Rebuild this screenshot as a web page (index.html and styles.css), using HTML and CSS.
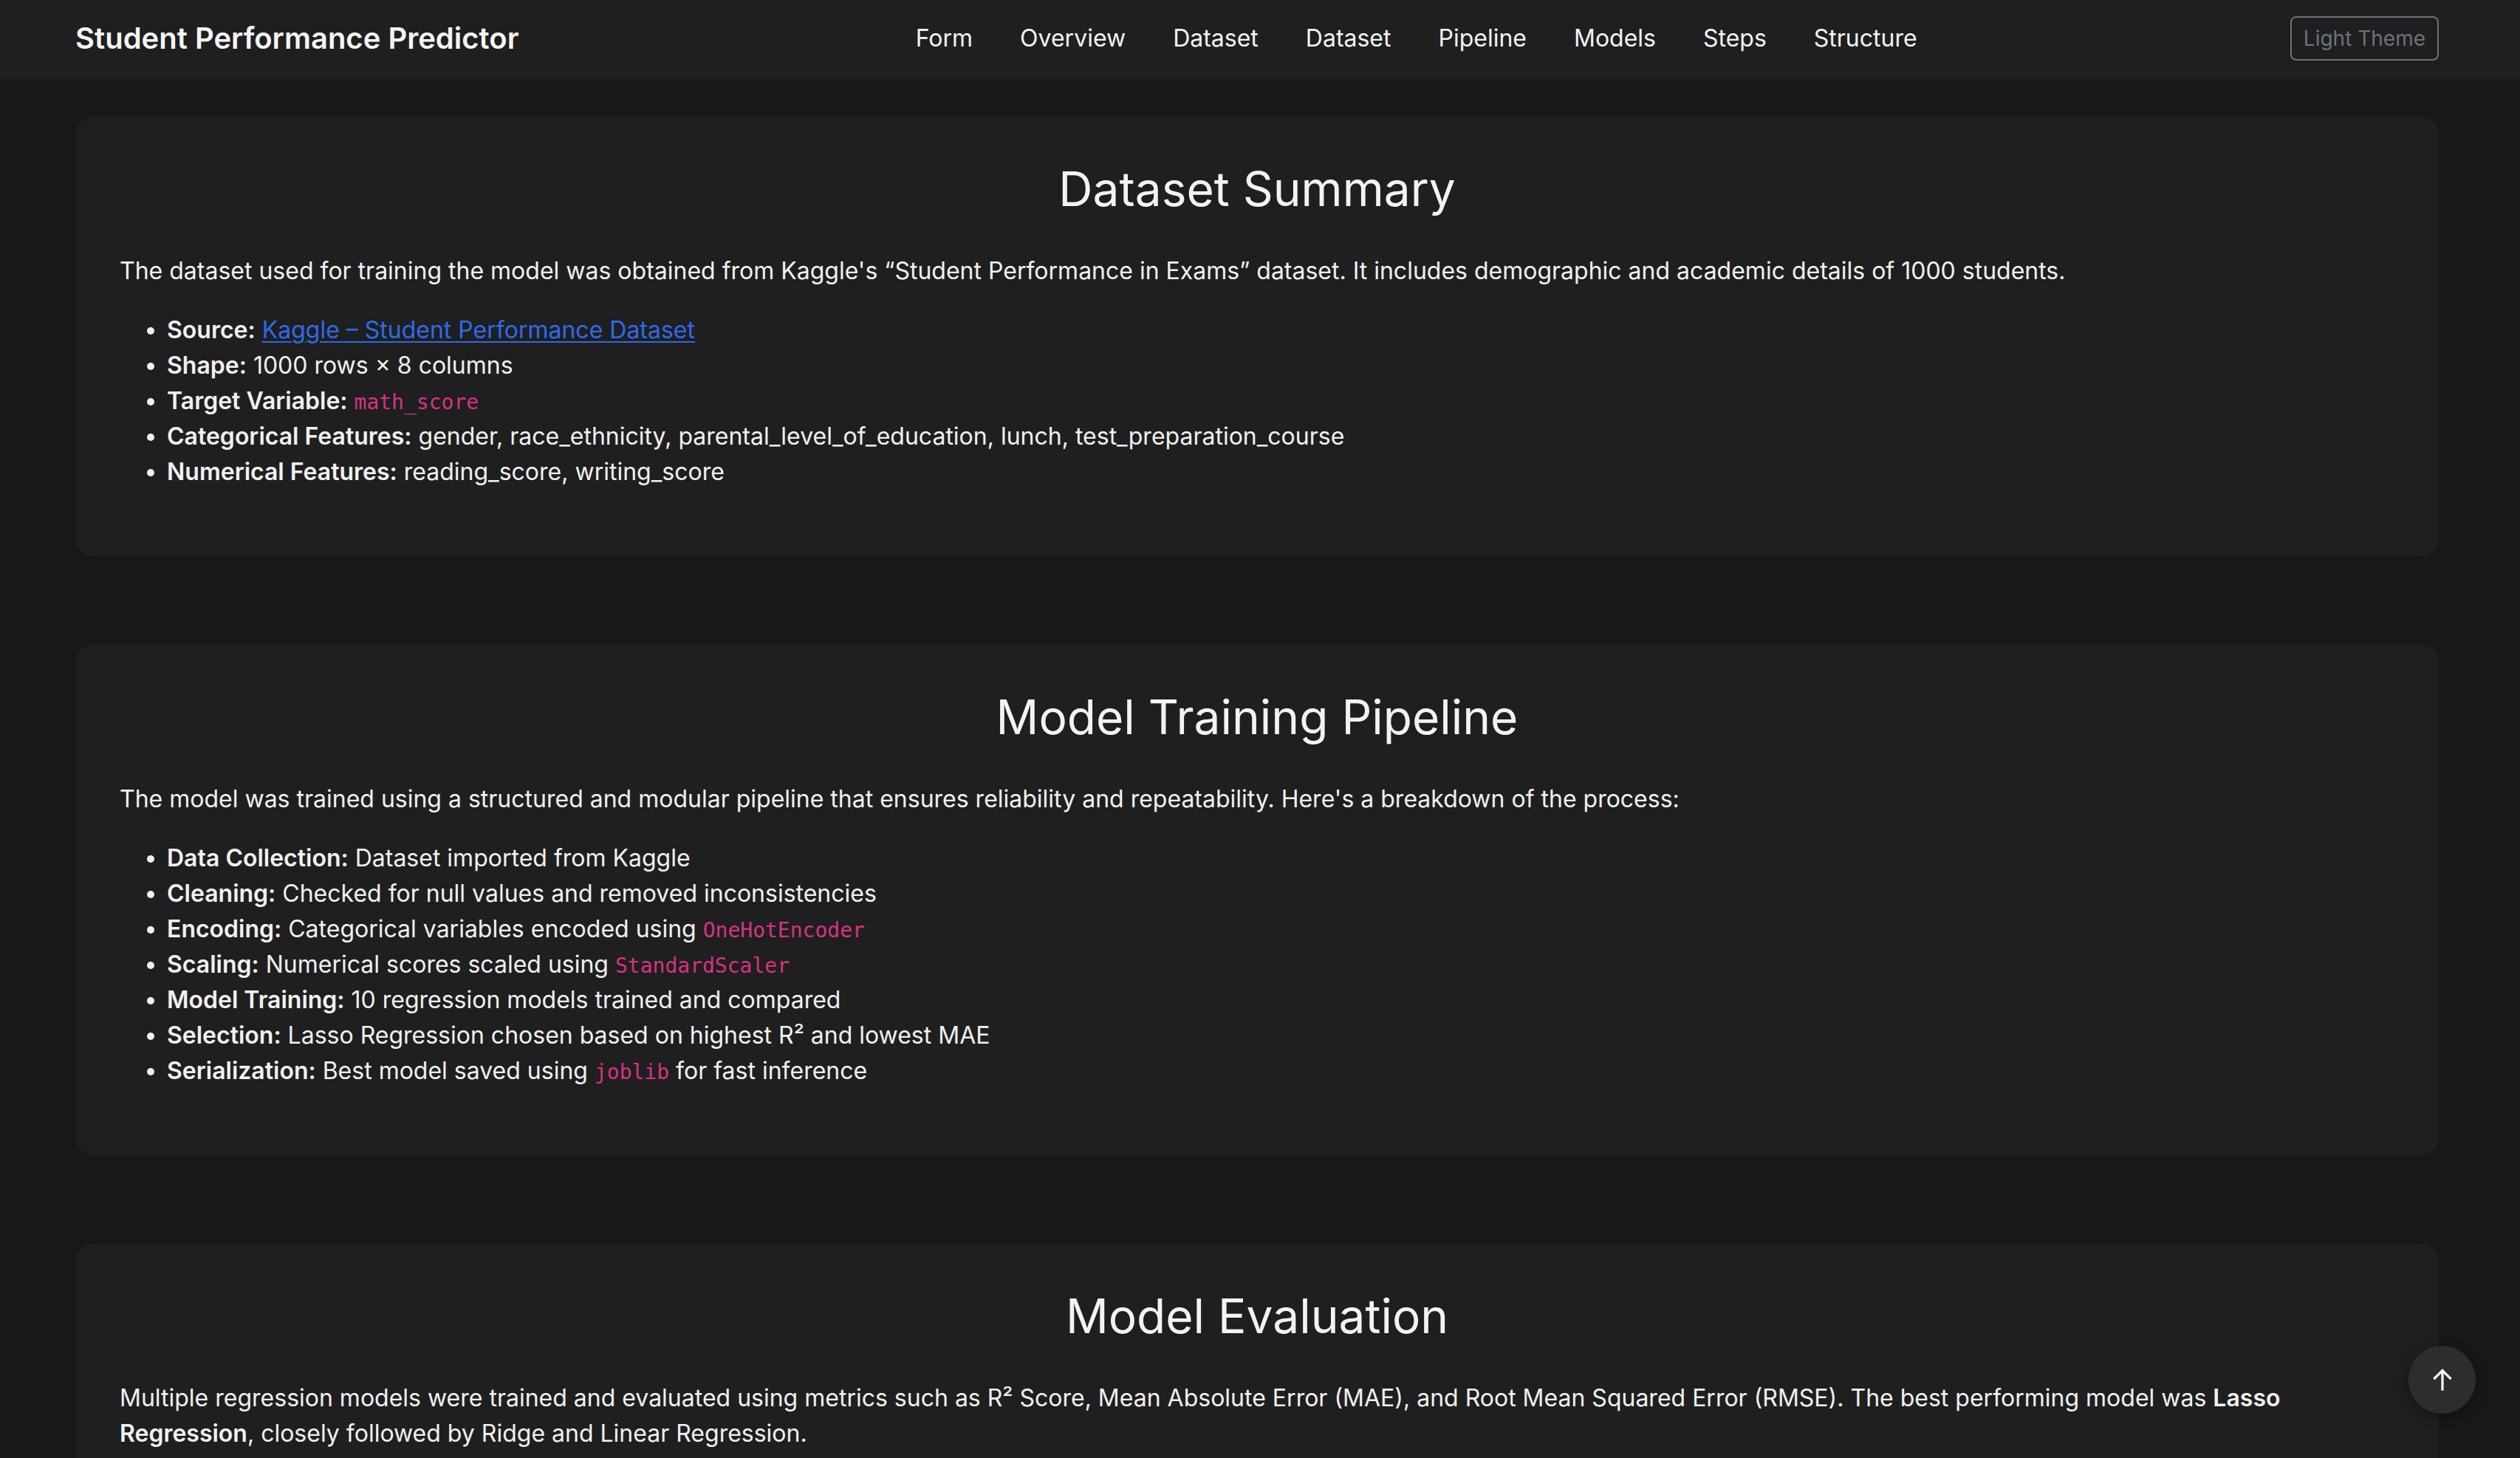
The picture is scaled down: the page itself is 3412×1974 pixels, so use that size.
FILE: index.html
```html
<!DOCTYPE html>
<html lang="en">
<head>
<meta charset="utf-8">
<title>Student Performance Predictor</title>
<link rel="stylesheet" href="styles.css">
</head>
<body>
<nav class="navbar">
  <div class="nav-inner">
    <a class="brand" href="#">Student Performance Predictor</a>
    <ul class="nav-links">
      <li><a href="#form">Form</a></li>
      <li><a href="#overview">Overview</a></li>
      <li><a href="#dataset">Dataset</a></li>
      <li><a href="#dataset">Dataset</a></li>
      <li><a href="#pipeline">Pipeline</a></li>
      <li><a href="#models">Models</a></li>
      <li><a href="#steps">Steps</a></li>
      <li><a href="#structure">Structure</a></li>
    </ul>
    <button class="theme-btn" type="button">Light Theme</button>
  </div>
</nav>

<main class="container">
  <section class="card" id="dataset">
    <h2 class="card-title">Dataset Summary</h2>
    <p>The dataset used for training the model was obtained from Kaggle's “Student Performance in Exams” dataset. It includes demographic and academic details of 1000 students.</p>
    <ul class="list">
      <li><strong>Source:</strong> <a class="link" href="#">Kaggle – Student Performance Dataset</a></li>
      <li><strong>Shape:</strong> 1000 rows × 8 columns</li>
      <li><strong>Target Variable:</strong> <code>math_score</code></li>
      <li><strong>Categorical Features:</strong> gender, race_ethnicity, parental_level_of_education, lunch, test_preparation_course</li>
      <li><strong>Numerical Features:</strong> reading_score, writing_score</li>
    </ul>
  </section>

  <section class="card" id="pipeline">
    <h2 class="card-title">Model Training Pipeline</h2>
    <p>The model was trained using a structured and modular pipeline that ensures reliability and repeatability. Here's a breakdown of the process:</p>
    <ul class="list">
      <li><strong>Data Collection:</strong> Dataset imported from Kaggle</li>
      <li><strong>Cleaning:</strong> Checked for null values and removed inconsistencies</li>
      <li><strong>Encoding:</strong> Categorical variables encoded using <code>OneHotEncoder</code></li>
      <li><strong>Scaling:</strong> Numerical scores scaled using <code>StandardScaler</code></li>
      <li><strong>Model Training:</strong> 10 regression models trained and compared</li>
      <li><strong>Selection:</strong> Lasso Regression chosen based on highest R² and lowest MAE</li>
      <li><strong>Serialization:</strong> Best model saved using <code>joblib</code> for fast inference</li>
    </ul>
  </section>

  <section class="card" id="models">
    <h2 class="card-title">Model Evaluation</h2>
    <p>Multiple regression models were trained and evaluated using metrics such as R² Score, Mean Absolute Error (MAE), and Root Mean Squared Error (RMSE). The best performing model was <strong>Lasso Regression</strong>, closely followed by Ridge and Linear Regression.</p>
  </section>
</main>

<button class="to-top" type="button" aria-label="Back to top">
  <svg width="26" height="30" viewBox="0 0 26 30" fill="none" stroke="#ffffff" stroke-width="3.2" stroke-linecap="square">
    <polyline points="2.5,13 13,2.5 23.5,13"/>
    <line x1="13" y1="3" x2="13" y2="28"/>
  </svg>
</button>
</body>
</html>
```

FILE: styles.css
```css
html {
  scrollbar-width: none;
}
html::-webkit-scrollbar {
  display: none;
}
body {
  margin: 0;
  background: #181818;
  color: #f1f1f1;
  font-family: Inter, "Noto Sans", "Liberation Sans", sans-serif;
  font-size: 32px;
  line-height: 48px;
}

.navbar {
  background: #1f1f1f;
  height: 108px;
  box-sizing: border-box;
  padding-bottom: 4px;
  display: flex;
  align-items: center;
}
.nav-inner {
  width: 3200px;
  margin-left: 102px;
  display: flex;
  align-items: center;
}
.brand {
  font-size: 40px;
  font-weight: 600;
  line-height: 60px;
  color: #f5f5f5;
  text-decoration: none;
}
.nav-links {
  flex: 1;
  display: flex;
  justify-content: center;
  list-style: none;
  margin: 0;
  padding: 0 0 0 32px;
}
.nav-links a {
  display: block;
  padding: 0 32px;
  color: #f3f3f3;
  text-decoration: none;
  font-size: 32px;
  line-height: 48px;
}
.theme-btn {
  background: transparent;
  border: 2px solid #6c737d;
  color: #6c737d;
  font-family: Inter, "Noto Sans", "Liberation Sans", sans-serif;
  font-size: 28px;
  line-height: 42px;
  padding: 7px 16px;
  border-radius: 8px;
}

.container {
  width: 3200px;
  margin-left: 102px;
  padding-top: 50px;
  display: flex;
  flex-direction: column;
  gap: 120px;
}
.card {
  background: #1f1f1f;
  border-radius: 24px;
  padding: 59px 60px 58px;
}
.card-title {
  margin: 0 0 49px;
  text-align: center;
  font-size: 64px;
  font-weight: 400;
  line-height: 77px;
  color: #f3f3f3;
}
.card p {
  margin: 0 0 32px;
}
.list {
  margin: 0 0 32px;
  padding-left: 64px;
}
strong {
  font-weight: 600;
}
.link {
  color: #2f6ae8;
  text-decoration: underline;
  text-underline-offset: 4px;
  text-decoration-thickness: 2px;
}
code {
  font-family: "DejaVu Sans Mono", "Liberation Mono", monospace;
  font-size: 28px;
  line-height: 1;
  color: #d63384;
}

.to-top {
  position: fixed;
  right: 60px;
  bottom: 60px;
  width: 91px;
  height: 92px;
  border-radius: 50%;
  border: none;
  background: #2d2d2d;
  box-shadow: 0 4px 16px rgba(0, 0, 0, 0.35);
  display: flex;
  align-items: center;
  justify-content: center;
  padding: 0;
}
```
